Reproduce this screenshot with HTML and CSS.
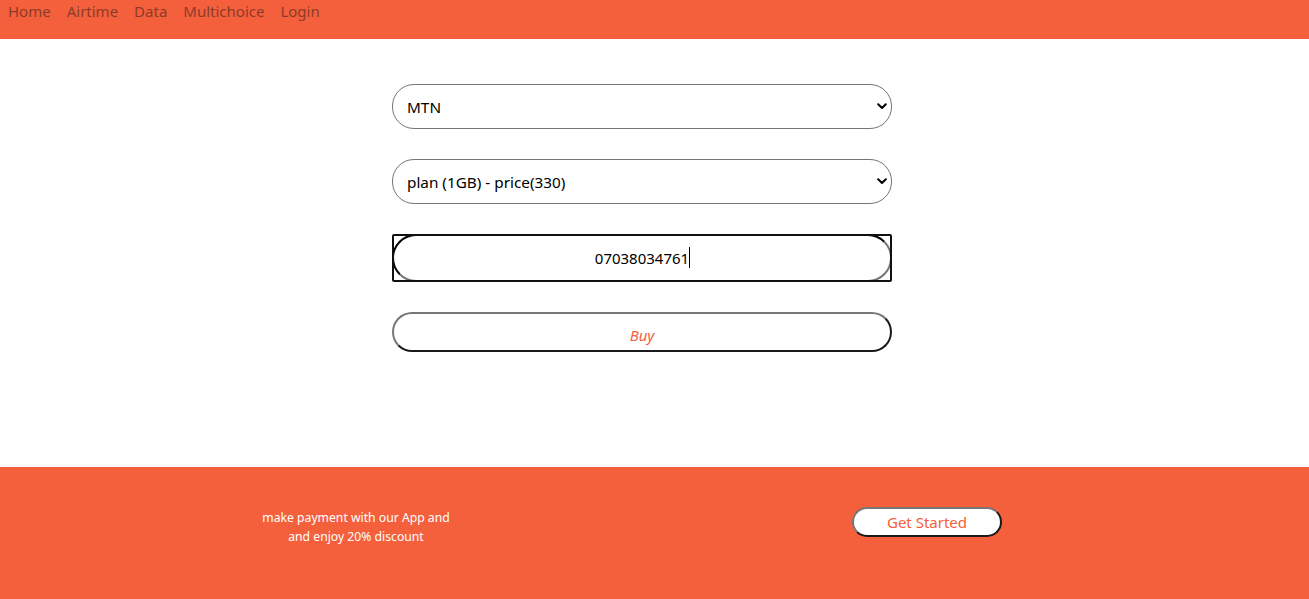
FILE: index.html
```html
<!DOCTYPE html>
<html lang="en">
<head>
<meta charset="utf-8">
<title>Data</title>
<link rel="stylesheet" href="styles.css">
</head>
<body>
<nav class="nav">
  <a href="#" class="nav-link">Home</a>
  <a href="#" class="nav-link">Airtime</a>
  <a href="#" class="nav-link">Data</a>
  <a href="#" class="nav-link">Multichoice</a>
  <a href="#" class="nav-link">Login</a>
</nav>
<main class="main">
  <form class="form">
    <div class="select-wrap">
      <select class="field select"><option>MTN</option></select>
      <svg class="chev" width="10" height="7" viewBox="0 0 10 7"><path d="M1.2 1.2 L5 5 L8.8 1.2" fill="none" stroke="#000" stroke-width="2" stroke-linecap="round" stroke-linejoin="round"/></svg>
    </div>
    <div class="select-wrap">
      <select class="field select"><option>plan (1GB) - price(330)</option></select>
      <svg class="chev" width="10" height="7" viewBox="0 0 10 7"><path d="M1.2 1.2 L5 5 L8.8 1.2" fill="none" stroke="#000" stroke-width="2" stroke-linecap="round" stroke-linejoin="round"/></svg>
    </div>
    <div class="phone-wrap">
      <input class="phone" type="text" value="07038034761">
      <span class="caret-line"></span>
    </div>
    <button type="button" class="buy">Buy</button>
  </form>
</main>
<footer class="footer">
  <p class="promo">make payment with our App and<br>and enjoy 20% discount</p>
  <button type="button" class="start">Get Started</button>
</footer>
</body>
</html>
```
FILE: styles.css
```css
* { box-sizing: border-box; }
html, body { margin: 0; padding: 0; }
body {
  font-family: "Noto Sans", "Open Sans", sans-serif;
  background: #fff;
  width: 1309px;
  height: 599px;
  overflow: hidden;
}
.nav {
  background: #f5603c;
  height: 39px;
  display: flex;
  gap: 16px;
  padding: 0 0 0 8px;
}
.nav-link {
  color: #8c3b28;
  text-decoration: none;
  font-size: 15px;
  line-height: 22px;
}
.main {
  height: 428px;
  padding: 45px 0 0 392px;
}
.form {
  width: 500px;
  display: flex;
  flex-direction: column;
  gap: 30px;
}
.select-wrap { position: relative; }
.field {
  width: 500px;
  height: 45px;
  border: 1px solid #767676;
  border-radius: 22px;
  background: #fff;
  font-family: inherit;
  font-size: 15.3px;
  color: #000;
  padding: 0 13px 0 14px;
  -webkit-appearance: none;
  appearance: none;
}
.chev {
  position: absolute;
  right: 5px;
  top: 19px;
  pointer-events: none;
}
.phone-wrap {
  position: relative;
  height: 48px;
  outline: 2px solid #101010;
  outline-offset: -2px;
  border-radius: 2px;
}
.phone {
  width: 500px;
  height: 48px;
  border: 2px inset #767676;
  border-color: #1a1a1a #767676 #767676 #1a1a1a;
  border-radius: 24px;
  text-align: center;
  font-family: inherit;
  font-size: 15px;
  color: #000;
  background: transparent;
  outline: none;
  padding: 0 0 1px 0;
}
.caret-line {
  position: absolute;
  left: 297px;
  top: 13px;
  width: 1px;
  height: 21px;
  background: #000;
}
.buy {
  width: 500px;
  height: 40px;
  border: 2px solid;
  border-color: #767676 #1a1a1a #1a1a1a #767676;
  border-radius: 20px;
  background: #fff;
  color: #f5603c;
  font-family: inherit;
  font-style: italic;
  font-size: 15px;
  padding: 6px 0 0 0;
}
.footer {
  background: #f5603c;
  height: 132px;
  display: flex;
  align-items: flex-start;
  padding: 41px 0 0 256px;
}
.promo {
  margin: 0;
  width: 200px;
  text-align: center;
  color: #fff;
  font-size: 12.2px;
  line-height: 19px;
}
.start {
  margin: -1px 0 0 396px;
  width: 150px;
  height: 30px;
  border: 2px solid;
  border-color: #767676 #1a1a1a #1a1a1a #767676;
  border-radius: 15px;
  background: #fff;
  color: #f5603c;
  font-family: inherit;
  font-size: 15px;
  padding: 0;
}
```
